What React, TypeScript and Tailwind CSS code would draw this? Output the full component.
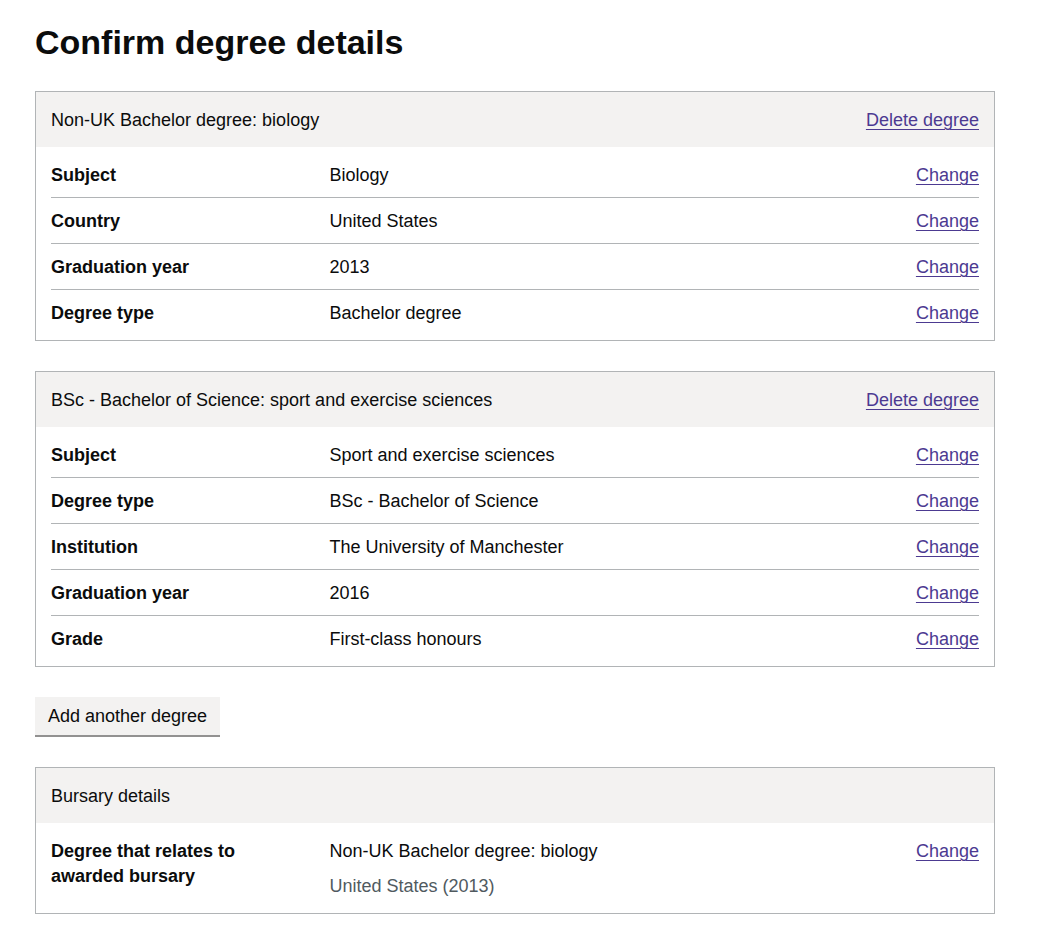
type Row = {
  key: React.ReactNode;
  value: React.ReactNode;
  secondary?: string;
};

type Card = {
  title: string;
  delete?: boolean;
  rows: Row[];
};

const cards: Card[] = [
  {
    title: "Non-UK Bachelor degree: biology",
    delete: true,
    rows: [
      { key: "Subject", value: "Biology" },
      { key: "Country", value: "United States" },
      { key: "Graduation year", value: "2013" },
      { key: "Degree type", value: "Bachelor degree" },
    ],
  },
  {
    title: "BSc - Bachelor of Science: sport and exercise sciences",
    delete: true,
    rows: [
      { key: "Subject", value: "Sport and exercise sciences" },
      { key: "Degree type", value: "BSc - Bachelor of Science" },
      { key: "Institution", value: "The University of Manchester" },
      { key: "Graduation year", value: "2016" },
      { key: "Grade", value: "First-class honours" },
    ],
  },
];

const bursary: Card = {
  title: "Bursary details",
  rows: [
    {
      key: (
        <>
          Degree that relates to
          <br />
          awarded bursary
        </>
      ),
      value: "Non-UK Bachelor degree: biology",
      secondary: "United States (2013)",
    },
  ],
};

function SummaryCard({ card }: { card: Card }) {
  return (
    <div className="border border-[#b1b4b6] mb-[30px]">
      <div className="bg-[#f3f2f1] px-[15px] pt-[16px] pb-[14px] flex justify-between leading-[25px]">
        <h2 className="font-normal">{card.title}</h2>
        {card.delete && (
          <a href="#" className="text-[#4c3a91] underline underline-offset-[3px] decoration-1">
            Delete degree
          </a>
        )}
      </div>
      <dl className="px-[15px] py-[5px]">
        {card.rows.map((row, i) => (
          <div
            key={i}
            className={
              "grid grid-cols-[30%_50%_20%] pt-[11px] pb-[9px] leading-[25px] " +
              (i < card.rows.length - 1 ? "border-b border-[#b1b4b6]" : "")
            }
          >
            <dt className="font-bold pr-5">{row.key}</dt>
            <dd className="pr-5">
              {row.value}
              {row.secondary && (
                <p className="text-[#505a5f] mt-[10px]">{row.secondary}</p>
              )}
            </dd>
            <dd className="text-right">
              <a href="#" className="text-[#4c3a91] underline underline-offset-[3px] decoration-1">
                Change
              </a>
            </dd>
          </div>
        ))}
      </dl>
    </div>
  );
}

export default function App() {
  return (
    <div
      className="bg-white text-[#0b0c0c] text-[18px] min-h-[930px] pl-[35px] pt-[20px] w-[995px]"
      style={{ fontFamily: '"Liberation Sans", Arial, sans-serif' }}
    >
      <h1 className="text-[34px] font-bold leading-[44px] mb-[27px]">
        Confirm degree details
      </h1>
      {cards.map((card, i) => (
        <SummaryCard key={i} card={card} />
      ))}
      <button className="bg-[#f3f2f1] shadow-[0_2px_0_#929191] px-[11px] pt-[8px] pb-[7px] leading-[19px] border-2 border-transparent mb-[32px]">
        Add another degree
      </button>
      <SummaryCard card={bursary} />
    </div>
  );
}
